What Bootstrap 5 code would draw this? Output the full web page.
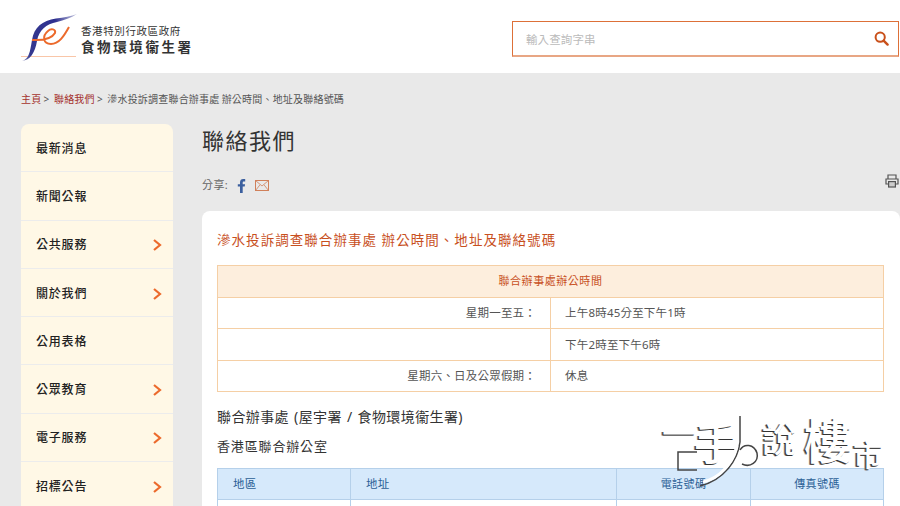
<!DOCTYPE html>
<html lang="zh-Hant">
<head>
  <meta charset="UTF-8" />
  <meta name="viewport" content="width=device-width, initial-scale=1" />
  <title>聯絡我們</title>
  <link href="https://cdn.jsdelivr.net/npm/bootstrap@5.3.0/dist/css/bootstrap.min.css" rel="stylesheet">
  <style>
    html, body { height: 506px; overflow: hidden; }
    body { background: #e9e9e9; color: #333; font-family: "Noto Sans", "Noto Sans CJK TC", sans-serif; position: relative; }
    .site-head { height: 73px; background: #fff; padding: 14px 1px 0 21px; }
    .logo-text { margin-left: 2px; padding-top: 10px; color: #333; }
    .logo-gov { font-size: 10.5px; letter-spacing: .6px; line-height: 14px; }
    .logo-dept { font-size: 13.5px; font-weight: 700; letter-spacing: 2.6px; line-height: 19px; }
    .search-box { width: 387px; height: 36px; margin-top: 7px; border: 1px solid #dd7038; border-bottom: 2px solid #e8a684; padding: 0 9px 0 13px; background: #fff; }
    .search-box span { font-size: 11.5px; color: #bbb; letter-spacing: .1px; padding-top: 2px; }
    .crumbs { padding: 18px 21px 0; height: 51px; font-size: 10px; letter-spacing: .2px; word-spacing: -.6px; line-height: 16px; color: #555; }
    .crumbs a { color: #a5322d; text-decoration: none; }
    .page-cols { padding-left: 21px; gap: 29px; }
    .side-menu { width: 152px; flex: none; background: #fff8e6; border-radius: 8px 8px 0 0; }
    .side-item { height: 48.3px; padding: 2px 11px 0 15px; border-bottom: 1px solid #ececec; font-size: 12px; letter-spacing: .8px; color: #222; font-weight: 500; }
    .page-main { flex: 1; min-width: 0; }
    .page-title { font-size: 22px; letter-spacing: 1.5px; line-height: 34px; margin: -1px 0 0; font-weight: 400; color: #333; }
    .share-row { height: 46px; margin-top: 8px; padding-bottom: 5px; font-size: 11px; color: #666; letter-spacing: .4px; }
    .fb-ico { margin: 0 9px 0 1px; }
    .print-ico { margin-left: auto; margin-top: -9px; margin-right: 1px; }
    .white-box { background: #fff; border-radius: 8px 8px 0 0; padding: 19px 15px 0; }
    .box-title { font-size: 13.5px; letter-spacing: 1.05px; color: #c8501e; font-weight: 400; line-height: 20px; margin: 0 0 15px; }
    .hours-table, .office-table { width: 667px; table-layout: fixed; border-collapse: collapse; font-size: 11.5px; letter-spacing: .2px; }
    .hours-table td, .hours-table th { border: 1px solid #f5cfa5; height: 31.5px; padding: 0 14px; font-weight: 400; color: #555; }
    .hours-table th { background: #fdeedd; color: #c8501e; text-align: center; font-size: 11px; letter-spacing: .55px; }
    .sub-a { font-size: 14px; font-weight: 400; letter-spacing: .4px; word-spacing: 1px; line-height: 20px; margin: 15px 0 9px; color: #333; }
    .sub-b { font-size: 13px; font-weight: 400; letter-spacing: .85px; line-height: 20px; margin: 0 0 12px; color: #333; }
    .office-table th { background: #d6e9fb; border: 1px solid #b5d0ea; height: 31px; padding: 0 15px; color: #2b5f96; font-weight: 400; }
    .office-table th.mid { text-align: center; font-size: 11px; letter-spacing: .4px; }
    .office-table td { border: 1px solid #b5d0ea; height: 31px; }
    .wm { position: absolute; left: 662px; top: 408px; width: 238px; height: 98px; }
    .wm-text { position: absolute; color: #fff; text-shadow: -1px 1px 0 #333, -2px 1px 0 #888; white-space: nowrap; font-weight: 500; }
    .wm-yi { left: 0; top: 5px; font-size: 34px; line-height: 40px; }
    .wm-shou { left: 32px; top: 10px; font-size: 44px; line-height: 50px; }
    .wm-shuo { left: 100px; top: 12px; font-size: 34px; line-height: 38px; }
    .wm-lou { left: 142px; top: 6px; font-size: 48px; line-height: 54px; }
    .wm-shi { left: 191px; top: 31px; font-size: 30px; line-height: 32px; }
  </style>
</head>
<body>
  <header class="site-head d-flex justify-content-between">
    <div class="d-flex">
      <svg width="58" height="48" viewBox="0 0 58 48">
        <defs><linearGradient id="fade" x1="0" y1="0" x2="1" y2="0"><stop offset="0" stop-color="#8d90bd"/><stop offset=".15" stop-color="#34388f"/><stop offset=".6" stop-color="#2d2f8f"/><stop offset="1" stop-color="#c9cbe2"/></linearGradient></defs>
        <path d="M0 42.5H55" stroke="#f9c6a8" stroke-width="1" fill="none"/>
        <path d="M1 47C8 45 9 38 11 26C13 13 21 7 35 4.500C43 3.500 50 2 56 0C50 4 43 6 36 8C25 10 18 16 16 27C14 39 9 46 1 47Z" fill="url(#fade)"/>
        <path d="M11 26C20 26.500 30 26 34 19C35 15 30 14 27 17C21 22 22 30 30 30C38 30 43 22 48 13" stroke="#ec6a2c" stroke-width="2" fill="none"/>
      </svg>
      <div class="logo-text">
        <div class="logo-gov">香港特別行政區政府</div>
        <div class="logo-dept">食物環境衞生署</div>
      </div>
    </div>
    <div class="search-box d-flex align-items-center justify-content-between">
      <span>輸入查詢字串</span>
      <svg width="15" height="15" viewBox="0 0 15 15"><circle cx="6.2" cy="6.200" r="4.600" stroke="#c9501a" stroke-width="2" fill="none"/><path d="M9.600 9.600L13.600 13.600" stroke="#c9501a" stroke-width="2.400" stroke-linecap="round"/></svg>
    </div>
  </header>

  <nav class="crumbs"><a href="#">主頁</a> &gt; &nbsp;<a href="#">聯絡我們</a> &gt; &nbsp;滲水投訴調查聯合辦事處 辦公時間、地址及聯絡號碼</nav>

  <div class="d-flex page-cols">
    <aside class="side-menu">
      <div class="side-item d-flex align-items-center justify-content-between">最新消息</div>
      <div class="side-item d-flex align-items-center justify-content-between">新聞公報</div>
      <div class="side-item d-flex align-items-center justify-content-between">公共服務<svg width="10" height="14" viewBox="0 0 10 14"><path d="M2 2L8 7L2 12" stroke="#ec6a2c" stroke-width="2.200" fill="none"/></svg></div>
      <div class="side-item d-flex align-items-center justify-content-between">關於我們<svg width="10" height="14" viewBox="0 0 10 14"><path d="M2 2L8 7L2 12" stroke="#ec6a2c" stroke-width="2.200" fill="none"/></svg></div>
      <div class="side-item d-flex align-items-center justify-content-between">公用表格</div>
      <div class="side-item d-flex align-items-center justify-content-between">公眾教育<svg width="10" height="14" viewBox="0 0 10 14"><path d="M2 2L8 7L2 12" stroke="#ec6a2c" stroke-width="2.200" fill="none"/></svg></div>
      <div class="side-item d-flex align-items-center justify-content-between">電子服務<svg width="10" height="14" viewBox="0 0 10 14"><path d="M2 2L8 7L2 12" stroke="#ec6a2c" stroke-width="2.200" fill="none"/></svg></div>
      <div class="side-item d-flex align-items-center justify-content-between">招標公告<svg width="10" height="14" viewBox="0 0 10 14"><path d="M2 2L8 7L2 12" stroke="#ec6a2c" stroke-width="2.200" fill="none"/></svg></div>
    </aside>

    <main class="page-main">
      <h1 class="page-title">聯絡我們</h1>
      <div class="share-row d-flex align-items-center">
        <span class="me-2">分享:</span>
        <svg class="fb-ico" width="9" height="14" viewBox="0 0 9 14"><path d="M3 14V7.600H.8V5.200H3V3.400C3 1.200 4.300 0 6.200 0H8.200V2.400H6.900C6 2.400 5.700 2.900 5.700 3.600V5.200H8.100L7.700 7.600H5.700V14Z" fill="#3b5f9e"/></svg>
        <svg width="14" height="11" viewBox="0 0 14 11"><rect x=".5" y=".5" width="13" height="10" fill="none" stroke="#d0805a"/><path d="M.5 .5L7 6L13.500 .5M.5 10.500L5 4.800M13.500 10.500L9 4.800" fill="none" stroke="#d0805a" stroke-width=".8"/></svg>
        <svg class="print-ico" width="14" height="14" viewBox="0 0 14 14"><path d="M3 5V1H11V5M3 10H1V5H13V10H11" fill="none" stroke="#555" stroke-width="1.200"/><rect x="3.600" y="7.600" width="6.800" height="5.400" fill="#ccc" stroke="#555" stroke-width="1.200"/></svg>
      </div>
      <section class="white-box">
        <h2 class="box-title">滲水投訴調查聯合辦事處 辦公時間、地址及聯絡號碼</h2>
        <table class="hours-table">
          <colgroup><col style="width:333px"><col></colgroup>
          <tr><th colspan="2">聯合辦事處辦公時間</th></tr>
          <tr><td class="text-end">星期一至五：</td><td>上午8時45分至下午1時</td></tr>
          <tr><td></td><td>下午2時至下午6時</td></tr>
          <tr><td class="text-end">星期六、日及公眾假期：</td><td>休息</td></tr>
        </table>
        <h3 class="sub-a">聯合辦事處 (屋宇署 / 食物環境衞生署)</h3>
        <h4 class="sub-b">香港區聯合辦公室</h4>
        <table class="office-table">
          <colgroup><col style="width:133px"><col style="width:266px"><col style="width:134px"><col></colgroup>
          <tr><th>地區</th><th>地址</th><th class="mid">電話號碼</th><th class="mid">傳真號碼</th></tr>
          <tr><td></td><td></td><td></td><td></td></tr>
        </table>
      </section>
    </main>
  </div>

  <div class="wm">
    <span class="wm-text wm-yi">一</span>
    <span class="wm-text wm-shou">手</span>
    <svg class="position-absolute top-0 start-0" width="238" height="98" viewBox="0 0 238 98">
      <path d="M35 44H16V62H35" fill="none" stroke="#444" stroke-width="1.500"/>
      <path d="M78 8V34C76 52 62 72 38 78" fill="none" stroke="#444" stroke-width="1.500"/>
      <path d="M41 74C58 70 70 56 75 38" fill="none" stroke="#fff" stroke-width="3"/>
      <path d="M78 42C82 35 92 36 95 45C97 54 88 60 80 56" fill="none" stroke="#444" stroke-width="1.500"/>
    </svg>
    <span class="wm-text wm-shuo">說</span>
    <span class="wm-text wm-lou">樓</span>
    <span class="wm-text wm-shi">市</span>
  </div>
</body>
</html>
